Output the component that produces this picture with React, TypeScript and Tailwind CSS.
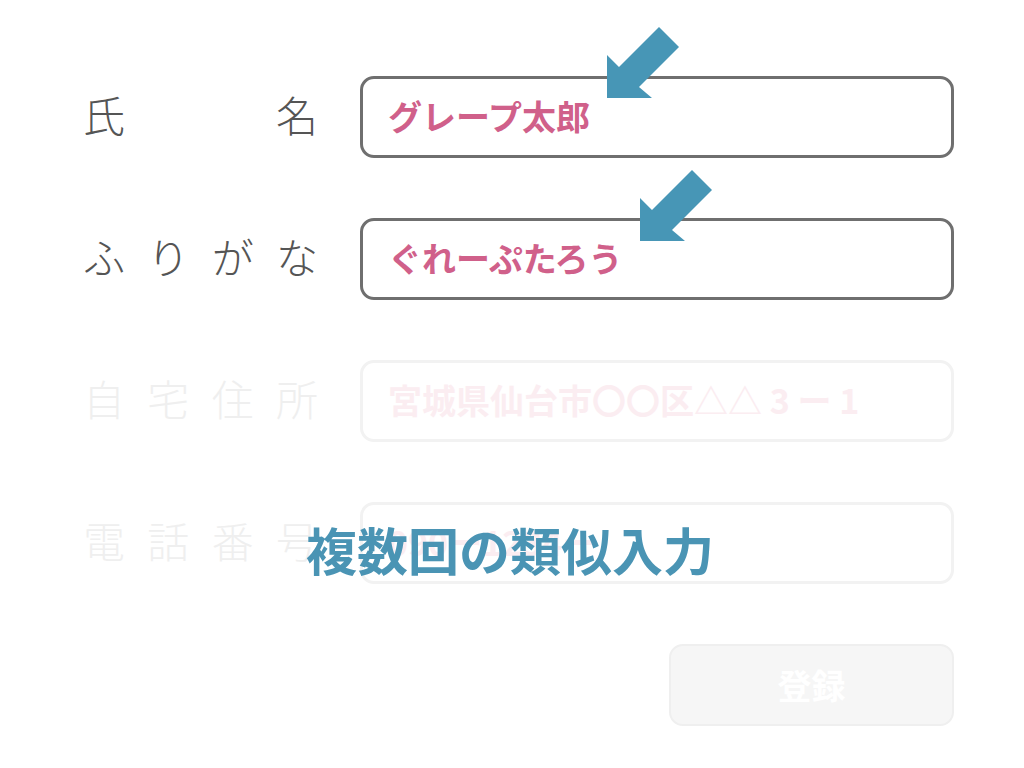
import React from "react";

const font = { fontFamily: '"Noto Sans CJK JP", "Noto Sans", sans-serif' };

function Label({ chars, faded }: { chars: string[]; faded?: boolean }) {
  return (
    <div
      className={`mb-[6px] flex w-[235px] shrink-0 justify-between text-[42px] font-light leading-none ${
        faded ? "text-[#efefef]" : "text-[#555555]"
      }`}
    >
      {chars.map((c, i) => (
        <span key={i}>{c}</span>
      ))}
    </div>
  );
}

function Field({ text, faded }: { text: string; faded?: boolean }) {
  return (
    <div
      className={`flex h-[82px] w-[594px] items-center rounded-[14px] border-[3px] pb-[2px] pl-[25px] text-[34px] font-bold leading-none ${
        faded ? "border-[#f2f2f2] text-[#fbedf1]" : "border-[#6f6f6f] text-[#d0608a]"
      }`}
    >
      {text}
    </div>
  );
}

function Arrow({ className }: { className: string }) {
  return (
    <svg className={className} width="74" height="72" viewBox="0 0 74 72">
      <polygon
        points="0,72 0,29 12,41 52,1 72,21 32,61 45,72"
        fill="#4796b6"
      />
    </svg>
  );
}

export default function App() {
  return (
    <div className="relative h-[768px] w-[1024px] overflow-hidden bg-white" style={font}>
      <div className="flex flex-col gap-[60px] pl-[83px] pt-[76px]">
        <div className="flex items-center gap-[42px]">
          <Label chars={["氏", "名"]} />
          <Field text="グレープ太郎" />
        </div>
        <div className="flex items-center gap-[42px]">
          <Label chars={["ふ", "り", "が", "な"]} />
          <Field text="ぐれーぷたろう" />
        </div>
        <div className="flex items-center gap-[42px]">
          <Label chars={["自", "宅", "住", "所"]} faded />
          <Field text="宮城県仙台市〇〇区△△ 3 ー 1" faded />
        </div>
        <div className="flex items-center gap-[42px]">
          <Label chars={["電", "話", "番", "号"]} faded />
          <Field text="090ー1234ー" faded />
        </div>
        <div className="flex justify-end pr-[70px]">
          <div className="flex h-[82px] w-[285px] items-center justify-center rounded-[14px] border-[2px] border-[#efefef] bg-[#f6f6f6] text-[34px] font-bold leading-none text-white">
            登録
          </div>
        </div>
      </div>

      <Arrow className="absolute left-[607px] top-[26px]" />
      <Arrow className="absolute left-[640px] top-[169px]" />

      <div className="absolute left-[306px] top-[524px] text-[51px] font-bold leading-none text-[#4a94b4]">
        複数回の類似入力
      </div>
    </div>
  );
}
